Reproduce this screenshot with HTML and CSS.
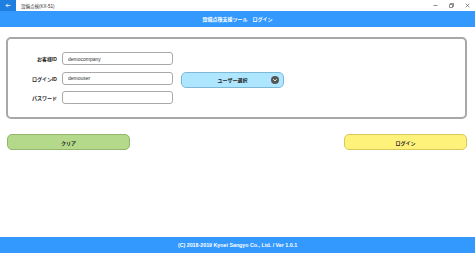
FILE: index.html
```html
<!DOCTYPE html>
<html lang="ja">
<head>
    <meta charset="UTF-8">
    <meta name="viewport" content="width=device-width, initial-scale=1.0">
    <title>設備点検(KX-51)</title>
    <link rel="stylesheet" href="styles.css">
</head>
<body>
    <div class="titlebar">
        <div class="back">
            <svg width="6" height="5" viewBox="0 0 6 5"><path d="M5.5 2.5H1M2.8 0.7L1 2.5l1.8 1.8" fill="none" stroke="#fff" stroke-width="0.8"/></svg>
        </div>
        <div class="app-title">設備点検(KX-51)</div>
        <div class="win-controls">
            <svg width="5" height="5" viewBox="0 0 5 5"><path d="M0.5 2.5h4" stroke="#444" stroke-width="0.6"/></svg>
            <svg width="5" height="5" viewBox="0 0 5 5"><path d="M0.5 1.5h3v3h-3zM1.5 1.5v-1h3v3h-1" fill="none" stroke="#444" stroke-width="0.6"/></svg>
            <svg width="5" height="5" viewBox="0 0 5 5"><path d="M0.7 0.7l3.6 3.6M4.3 0.7l-3.6 3.6" stroke="#444" stroke-width="0.6"/></svg>
        </div>
    </div>

    <header>設備点検支援ツール　ログイン</header>

    <main class="content">
        <div class="panel">
            <div class="login-form">
                <label class="label">お客様ID</label>
                <input class="field" type="text" value="democompany">
                <label class="label">ログインID</label>
                <input class="field" type="text" value="demouser">
                <button class="user-select">
                    <span>ユーザー選択</span>
                    <svg class="chevron" width="8" height="8" viewBox="0 0 8 8">
                        <circle cx="4" cy="4" r="4" fill="#555"/>
                        <path d="M2.3 3.2L4 4.9l1.7-1.7" fill="none" stroke="#fff" stroke-width="1"/>
                    </svg>
                </button>
                <label class="label">パスワード</label>
                <input class="field" type="password">
            </div>
        </div>

        <div class="actions">
            <button class="btn btn-clear">クリア</button>
            <button class="btn btn-login">ログイン</button>
        </div>
    </main>

    <footer>(C) 2018-2019 Kyoei Sangyo Co., Ltd. / Ver 1.0.1</footer>
</body>
</html>
```

FILE: styles.css
```css
body {
    font-family: "Liberation Sans", "Noto Sans CJK JP", sans-serif;
    margin: 0;
    padding: 0;
    width: 475px;
    height: 253px;
    display: flex;
    flex-direction: column;
    background: #fff;
    color: #222;
    overflow: hidden;
}

.titlebar {
    height: 11px;
    display: flex;
    align-items: center;
    background: #fff;
}

.back {
    width: 16px;
    height: 11px;
    background: #1e7fe0;
    display: flex;
    align-items: center;
    justify-content: center;
}

.app-title {
    margin-left: 5px;
    font-size: 4.5px;
    color: #333;
}

.win-controls {
    margin-left: auto;
    margin-right: 5px;
    display: flex;
    gap: 11px;
}

header {
    height: 16px;
    line-height: 16px;
    background: #3399ff;
    color: #fff;
    text-align: center;
    font-size: 5px;
    font-weight: bold;
}

.content {
    padding: 10px 8px 0 6px;
}

.panel {
    box-sizing: border-box;
    height: 82px;
    border: 2px solid #a8a8a8;
    border-radius: 5px;
    padding-top: 13px;
}

.login-form {
    display: grid;
    grid-template-columns: 49px 111px 106px;
    grid-template-rows: 13px 13px 13px;
    column-gap: 5px;
    row-gap: 6.5px;
}

.label {
    grid-column: 1;
    font-size: 5px;
    font-weight: bold;
    text-align: right;
    align-self: center;
}

.field {
    grid-column: 2;
    box-sizing: border-box;
    height: 13px;
    margin: 0;
    padding: 0 5px;
    border: 1px solid #aaa;
    border-radius: 3px;
    font-family: "Liberation Sans", sans-serif;
    font-size: 5px;
    color: #333;
    background: #fff;
}

.user-select {
    grid-column: 3;
    grid-row: 2;
    margin-left: 3px;
    width: 103px;
    height: 16px;
    padding: 0 4px;
    display: flex;
    align-items: center;
    justify-content: center;
    position: relative;
    background: #aee6ff;
    border: 1px solid #7fb8d6;
    border-radius: 5px;
    font-family: "Noto Sans CJK JP", sans-serif;
    font-size: 5px;
    font-weight: bold;
    color: #222;
}

.chevron {
    position: absolute;
    right: 4px;
    top: 3px;
}

.actions {
    display: flex;
    justify-content: space-between;
    margin-top: 15px;
    padding-left: 1px;
}

.btn {
    width: 123px;
    height: 16px;
    padding: 0;
    border-radius: 5px;
    font-family: "Noto Sans CJK JP", sans-serif;
    font-size: 5px;
    font-weight: bold;
    color: #222;
}

.btn-clear {
    background: #b5d98a;
    border: 1px solid #93b86a;
}

.btn-login {
    background: #fff27a;
    border: 1px solid #d8c95a;
}

footer {
    margin-top: auto;
    height: 16px;
    line-height: 16px;
    background: #3399ff;
    color: #fff;
    text-align: center;
    font-size: 5.3px;
    font-weight: bold;
}
```
